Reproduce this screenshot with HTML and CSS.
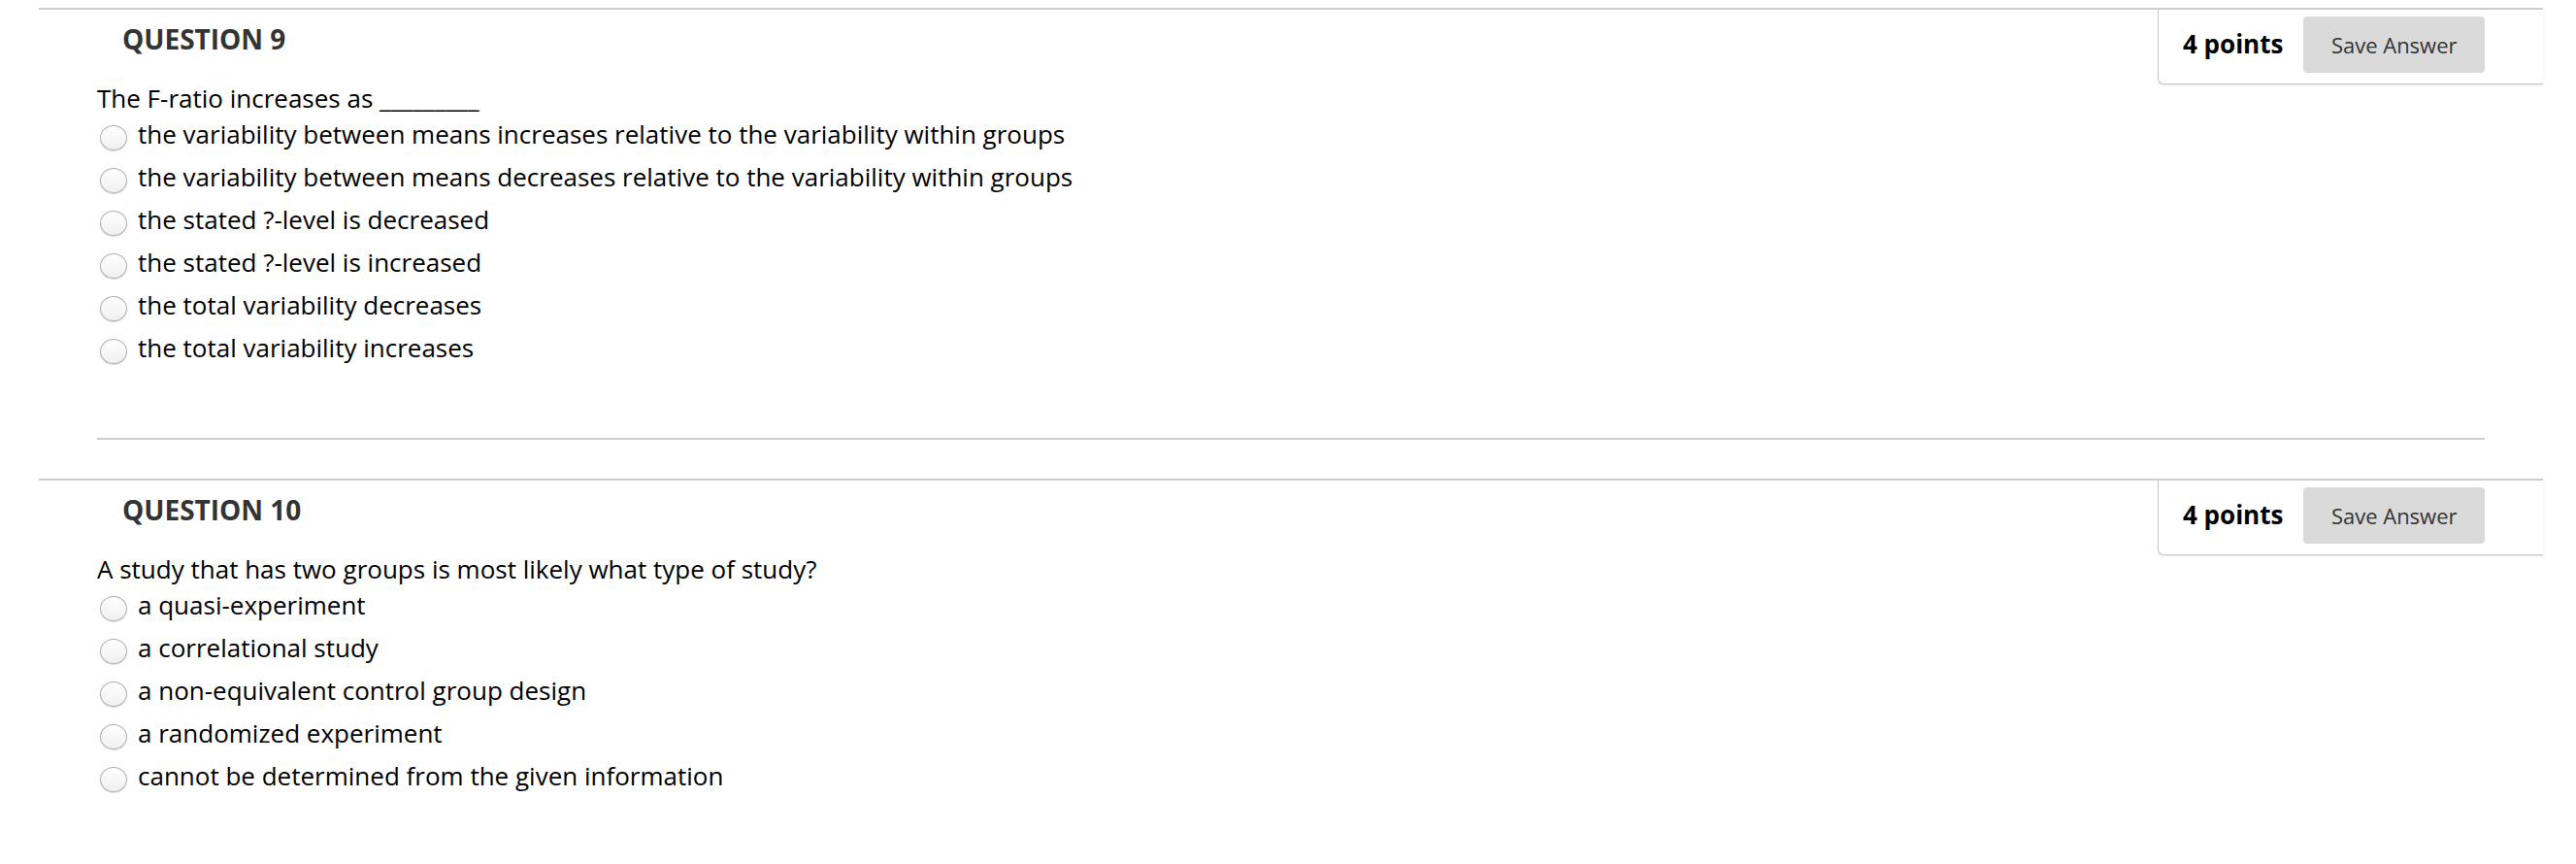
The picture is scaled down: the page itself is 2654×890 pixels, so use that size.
FILE: index.html
```html
<!DOCTYPE html>
<html lang="en">
<head>
<meta charset="utf-8">
<title>Questions</title>
<link rel="stylesheet" href="styles.css">
</head>
<body>
<div class="page">
  <section class="question">
    <div class="q-head">
      <h2 class="q-title">QUESTION 9</h2>
      <div class="q-points">
        <span class="points">4 points</span>
        <button class="save" type="button">Save Answer</button>
      </div>
    </div>
    <div class="q-body">
      <p class="q-text">The F-ratio increases as _________</p>
      <ul class="options">
        <li class="option"><span class="radio"></span><span class="opt-label">the variability between means increases relative to the variability within groups</span></li>
        <li class="option"><span class="radio"></span><span class="opt-label">the variability between means decreases relative to the variability within groups</span></li>
        <li class="option"><span class="radio"></span><span class="opt-label">the stated ?-level is decreased</span></li>
        <li class="option"><span class="radio"></span><span class="opt-label">the stated ?-level is increased</span></li>
        <li class="option"><span class="radio"></span><span class="opt-label">the total variability decreases</span></li>
        <li class="option"><span class="radio"></span><span class="opt-label">the total variability increases</span></li>
      </ul>
    </div>
    <hr class="q-sep">
  </section>
  <section class="question">
    <div class="q-head">
      <h2 class="q-title">QUESTION 10</h2>
      <div class="q-points">
        <span class="points">4 points</span>
        <button class="save" type="button">Save Answer</button>
      </div>
    </div>
    <div class="q-body">
      <p class="q-text">A study that has two groups is most likely what type of study?</p>
      <ul class="options">
        <li class="option"><span class="radio"></span><span class="opt-label">a quasi-experiment</span></li>
        <li class="option"><span class="radio"></span><span class="opt-label">a correlational study</span></li>
        <li class="option"><span class="radio"></span><span class="opt-label">a non-equivalent control group design</span></li>
        <li class="option"><span class="radio"></span><span class="opt-label">a randomized experiment</span></li>
        <li class="option"><span class="radio"></span><span class="opt-label">cannot be determined from the given information</span></li>
      </ul>
    </div>
  </section>
</div>
</body>
</html>
```

FILE: styles.css
```css
* { box-sizing: border-box; }

html, body {
  margin: 0;
  padding: 0;
  background: #ffffff;
}

body {
  font-family: "Open Sans", "Noto Sans", "Liberation Sans", sans-serif;
  color: #000;
}

.page {
  padding-top: 8px;
  width: 2654px;
  height: 890px;
  overflow: hidden;
}

.question {
  margin: 0 34px 0 40px;
  border-top: 2px solid #cdcdcd;
}

.q-head {
  display: flex;
  justify-content: space-between;
  align-items: flex-start;
}

.q-title {
  margin: 11px 0 0 86px;
  font-size: 28px;
  line-height: 38px;
  font-weight: 700;
  color: #333333;
}

.q-points {
  display: flex;
  align-items: center;
  gap: 21px;
  width: 397px;
  padding: 7px 60px 11px 25px;
  border-left: 1px solid #c9c9c9;
  border-bottom: 1px solid #c9c9c9;
  border-bottom-left-radius: 6px;
  box-shadow: 0 1px 2px rgba(0, 0, 0, 0.10);
}

.points {
  font-size: 26px;
  font-weight: 700;
  color: #000;
  white-space: nowrap;
  margin-top: -2px;
}

.save {
  width: 187px;
  height: 58px;
  border: none;
  border-radius: 4px;
  background: #dadada;
  color: #333333;
  font-family: "Open Sans", "Noto Sans", "Liberation Sans", sans-serif;
  font-size: 22px;
  padding: 0;
}

.q-body {
  padding-left: 60px;
}

.q-text {
  margin: 0;
  padding-top: 1px;
  font-size: 26px;
  line-height: 26px;
  color: #000;
}

.options {
  list-style: none;
  margin: 2px 0 0;
  padding: 0;
}

.option {
  display: flex;
  align-items: center;
  height: 44px;
  font-size: 26px;
  line-height: 44px;
  color: #000;
}

.radio {
  flex: none;
  width: 28px;
  height: 26px;
  margin: 8px 11px 0 3px;
  border-radius: 50%;
  border: 1px solid #b0b0b0;
  background: linear-gradient(#ffffff, #f0f0f0);
  box-shadow: 0 1px 1px rgba(0, 0, 0, 0.14);
}

.q-sep {
  margin: 71px 60px 40px 60px;
  height: 2px;
  border: none;
  background: #cdcdcd;
}
```
